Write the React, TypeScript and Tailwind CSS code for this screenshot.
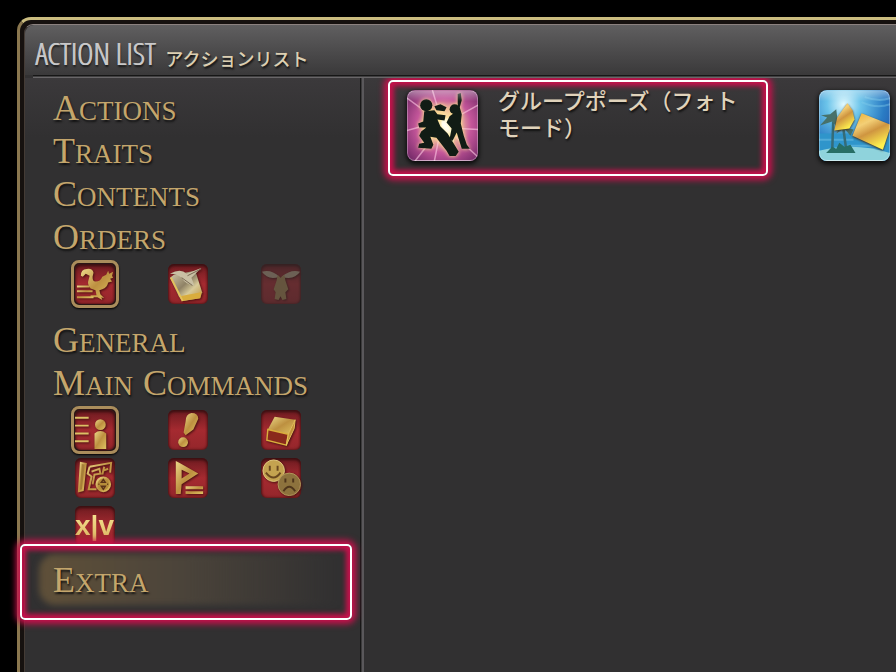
import type { ReactNode } from 'react';

type IconKind =
  | 'mount' | 'journal' | 'pet'
  | 'self' | 'duty' | 'logs'
  | 'travel' | 'party' | 'social'
  | 'system';

interface IconEntry {
  kind: IconKind;
  label: string;
  selected?: boolean;
  disabled?: boolean;
}

const ORDER_ICONS: IconEntry[] = [
  { kind: 'mount', label: 'Companion', selected: true },
  { kind: 'journal', label: 'Carbuncle' },
  { kind: 'pet', label: 'Pet', disabled: true },
];

const COMMAND_ICONS: IconEntry[] = [
  { kind: 'self', label: 'Character', selected: true },
  { kind: 'duty', label: 'Duty' },
  { kind: 'logs', label: 'Logs' },
  { kind: 'travel', label: 'Travel' },
  { kind: 'party', label: 'Party' },
  { kind: 'social', label: 'Social' },
  { kind: 'system', label: 'System' },
];

const GOLD = 'url(#gold)';

/* Shared gradients, referenced by id from the icons */
function Gradients() {
  return (
    <svg className="absolute h-0 w-0" aria-hidden="true">
      <defs>
        <linearGradient id="gold" x1="0" y1="0" x2="1" y2="1">
          <stop offset="0" stopColor="#ecd888" />
          <stop offset="0.5" stopColor="#bd9040" />
          <stop offset="1" stopColor="#e0c463" />
        </linearGradient>
        <linearGradient id="silver" x1="0" y1="0" x2="1" y2="1">
          <stop offset="0" stopColor="#d9cfae" />
          <stop offset="0.45" stopColor="#8f8266" />
          <stop offset="0.65" stopColor="#d8cb9a" />
          <stop offset="1" stopColor="#b98d33" />
        </linearGradient>
        <linearGradient id="ticket" x1="0" y1="0" x2="0.5" y2="1">
          <stop offset="0" stopColor="#f0b030" />
          <stop offset="0.35" stopColor="#f3cf76" />
          <stop offset="0.6" stopColor="#cf9540" />
          <stop offset="1" stopColor="#fff04e" />
        </linearGradient>
        <radialGradient id="burst" cx="0.52" cy="0.5" r="0.7">
          <stop offset="0" stopColor="#fffbe0" />
          <stop offset="0.25" stopColor="#f8cfa0" />
          <stop offset="0.55" stopColor="#c4569a" />
          <stop offset="1" stopColor="#6c2563" />
        </radialGradient>
        <radialGradient id="sky" cx="0.35" cy="0.2" r="0.95">
          <stop offset="0" stopColor="#e2faff" />
          <stop offset="0.25" stopColor="#6cc4ea" />
          <stop offset="0.6" stopColor="#2a7cc4" />
          <stop offset="1" stopColor="#233f9c" />
        </radialGradient>
      </defs>
    </svg>
  );
}

function Glyph({ kind }: { kind: IconKind }) {
  switch (kind) {
    case 'mount':
      return (
        <g fill={GOLD}>
          <path d="M6 12Q6 5 12 5Q18 4 19 9L18 13Q18 18 21 18Q26 18 28 13L32 11L34 7L35 10L39 8L38 12L39 14L36 15L38 18L34 19Q33 24 28 26L25 27L26 31L30 35L27 34L28 37L23 34H16V32H22L21 27L16 25Q12 21 14 16L15 12L11 10L8 13Z" />
          <path d="M2 22H15V24H2ZM2 27H18V29H2ZM2 33H19V35H2Z" />
        </g>
      );
    case 'journal':
      return (
        <>
          <path d="M2 14L6 11L28 7L35 29L33 35L15 38L11 33Z" fill="url(#silver)" />
          <path d="M12 33L34 29L33 35L15 38Z" fill="#d9ad3d" />
          <path d="M3 14L13 34L15 38" fill="none" stroke="#e4c25b" strokeWidth="2" />
          <path d="M2 10Q13 4 19 10L34 4L24 14L27 22Q18 21 14 14Q9 10 2 10Z" fill="#c9c0a4" />
          <path d="M20 12L34 5M14 14L25 22" stroke="#776851" strokeWidth="1" />
        </>
      );
    case 'pet':
      return (
        <g fill="#a5814e">
          <path d="M1 8Q10 5 19 13Q7 17 1 8ZM40 8Q31 5 21 13Q34 17 40 8Z" fill="#b59c82" />
          <path d="M17 11L20 14L24 11L25 17L28 26L25 29L26 36L22 37L20 33L18 37L14 36L15 29L13 26L16 17Z" />
        </g>
      );
    case 'self':
      return (
        <g fill={GOLD}>
          <path d="M0 7H14V9H0ZM0 15H14V17H0ZM0 23H14V25H0ZM0 31H14V33H0Z" fill="#dcc065" />
          <circle cx="26" cy="15" r="5.5" />
          <path d="M20 24Q26 19 32 24V40H20Z" />
        </g>
      );
    case 'duty':
      return (
        <g fill={GOLD}>
          <path d="M18 12Q18 4 24 3Q31 3 31 9L26 20L18 26L16 23Z" />
          <circle cx="15.5" cy="33" r="5" />
        </g>
      );
    case 'logs':
      return (
        <>
          <path d="M14 7L35 10L28 25L7 20Z" fill={GOLD} />
          <path d="M7 20L28 25L26 36L6 31Z" fill="#8a2a1c" stroke="#d9ae3c" strokeWidth="1.5" />
          <path d="M35 10L34 19L26 36L28 25Z" fill="#c1913a" stroke="#e4c25b" />
        </>
      );
    case 'travel':
      return (
        <g fill="none" stroke={GOLD} strokeWidth="2">
          <path d="M6 5L11 6L8 33L4 34Z" fill="#a67f38" />
          <path d="M15 9L37 5L36 15M15 9L13 16L17 19L14 32H22M17 14L25 11L26 16L20 17L18 27M30 9L28 17M29 13L34 11" />
          <circle cx="29" cy="27" r="7" fill="#b68d3a" />
          <path d="M29 22L31 25H27ZM29 32L31 29H27ZM24 27H25M33 27H34" stroke="#5b3218" strokeWidth="1.5" />
        </g>
      );
    case 'party':
      return (
        <g fill={GOLD}>
          <path fillRule="evenodd" d="M8 3L12 5L31 16L14 27L13 37H8ZM14 12V21L22 16Z" />
          <path d="M18 29H36V32H18ZM18 34H36V37H18Z" />
        </g>
      );
    case 'social':
      return (
        <>
          <circle cx="13" cy="13" r="11" fill="#c4a350" stroke="#e0ca80" />
          <path d="M9 8V13M17 8V13M5 15Q13 25 20 15" fill="none" stroke="#69481f" strokeWidth="2" />
          <circle cx="29" cy="27" r="11.5" fill="#8d723d" stroke="#b3985a" />
          <path d="M25 21V25M33 21V25M23 34Q29 25 35 34" fill="none" stroke="#4f351b" strokeWidth="2" />
        </>
      );
    default:
      return null;
  }
}

function CommandIcon({ kind, label, selected, disabled }: IconEntry) {
  return (
    <div className="flex h-12 items-center justify-center">
      <button
        type="button"
        aria-label={label}
        disabled={disabled}
        className={`flex shrink-0 items-center justify-center rounded-lg ${
          selected ? 'border-[3px] border-[#aa8d5c] bg-[#2a1716] p-px shadow-[0_1px_2px_#000]' : ''
        } ${disabled ? 'opacity-45' : ''}`}
      >
        <span className="flex size-10 items-center justify-center rounded-md bg-linear-to-b from-[#6d1b20] via-[#a52a30] to-[#94262b] shadow-[inset_0_2px_3px_#3a1012,inset_0_0_3px_#3a1012]">
          {kind === 'system' ? (
            <span className="bg-linear-to-b from-[#fff0a0] to-[#d4ac54] bg-clip-text font-['Liberation_Sans',sans-serif] text-[28px] leading-10 font-bold text-transparent">
              x|v
            </span>
          ) : (
            <svg viewBox="0 0 41 41" className="size-full drop-shadow-[1px_1px_1px_#4a1010]" aria-hidden="true">
              <Glyph kind={kind} />
            </svg>
          )}
        </span>
      </button>
    </div>
  );
}

function IconGrid({ icons }: { icons: IconEntry[] }) {
  return (
    <div className="ml-[23px] grid w-[279px] grid-cols-3">
      {icons.map(icon => <CommandIcon key={icon.kind} {...icon} />)}
    </div>
  );
}

function MenuItem({ label }: { label: string }) {
  return (
    <button
      type="button"
      className="flex h-[43px] w-full items-center gap-[10px] pl-[28px] text-left font-['Liberation_Serif',serif] text-[27px] leading-[43px] text-[#c4a66c] uppercase [text-shadow:1px_2px_2px_#111]"
    >
      {label.split(' ').map(word => (
        <span key={word} className="inline-block first-letter:text-[36px]">{word}</span>
      ))}
    </button>
  );
}

/* Glowing marker drawn over whatever it surrounds */
function Marker({ className }: { className: string }) {
  return (
    <div
      className={`pointer-events-none absolute rounded-[5px] border-2 border-white shadow-[0_0_6px_4px_#c9104c,inset_0_0_5px_4px_#c9104c] ${className}`}
    />
  );
}

function PoseArt() {
  return (
    <svg viewBox="0 0 70 70" className="size-full" aria-hidden="true">
      <rect width="70" height="70" fill="url(#burst)" />
      <g stroke="#ffc9e4" strokeWidth="1.5" opacity="0.6">
        <path d="M0 8L22 24M0 40L18 35M8 70L25 48M27 70L31 50M70 15L50 26M70 39L52 38M70 66L48 46M25 0L31 20" />
      </g>
      <path d="M34 30L42 27L41 34L48 38L45 55L34 44Z" fill="#fff" />
      <g fill="#111c15" className="drop-shadow-[0_0_2px_#ffe98a]">
        <path d="M50 4L53 3L54 10L52 17L54 24L53 33L56 45L59 54L62 58L54 58L49 42L45 50L42 48L44 38L39 32L42 26L46 23L50 18Z" />
        <circle cx="47" cy="19" r="5" />
        <path d="M17 21L27 20L30 24L38 25L37 30L30 29L33 36L40 43L51 61L48 65L42 65L39 60L29 47L23 46L26 54L24 58L11 57L12 53L17 52L12 45L14 41L19 37L12 37L11 33L16 31Z" />
        <circle cx="19" cy="15" r="6" />
        <path d="M27 16L33 14L39 17L37 21L29 20Z" />
      </g>
    </svg>
  );
}

function BeachArt() {
  return (
    <svg viewBox="0 0 70 70" className="size-full" aria-hidden="true">
      <rect width="70" height="70" fill="url(#sky)" />
      <path d="M0 43H70V70H0Z" fill="#2f95cb" />
      <path d="M0 60Q35 51 70 62V70H0Z" fill="#8fd3dc" />
      <path d="M42 12Q57 19 70 14M45 7Q59 12 70 8M0 49H34M28 55H60" fill="none" stroke="#83cdec" strokeWidth="2" opacity="0.4" />
      <path d="M14 31L13 61M24 38L27 60" stroke="#356c78" strokeWidth="2.5" />
      <path d="M13 31L1 35L8 27L2 25L11 24L17 19L18 27L28 29L20 32L19 38ZM25 38L17 43L21 36L34 39L31 45Z" fill="#47716a" />
      <path d="M7 62L13 56L17 58L20 52L25 56L31 54L36 62Z" fill="#276e65" />
      <g fill="url(#ticket)" strokeLinejoin="round" className="drop-shadow-[0_1px_1px_#3a2c1e]">
        <path d="M28 13L33 20L35 29L30 38L15 40L18 27Z" />
        <path d="M42 23L70 34V38L63 59L33 45Z" />
      </g>
    </svg>
  );
}

function ActionTile({ label, art, children, marked }: { label: string; art: ReactNode; children?: ReactNode; marked?: boolean }) {
  return (
    <button type="button" aria-label={label} className="relative flex items-start gap-5 text-left">
      <span className="relative size-[71px] shrink-0 overflow-hidden rounded-lg shadow-[0_2px_4px_1px_#0b0b0b]">
        {art}
        <span className="absolute inset-0 rounded-lg border border-white/30 bg-linear-to-b from-white/40 to-transparent to-15%" />
      </span>
      {children && (
        <span className="-mt-1 w-[248px] font-['Noto_Sans_CJK_JP',sans-serif] text-[22px] leading-[27px] font-medium text-[#e0d3bb] [text-shadow:1px_2px_2px_#111]">
          {children}
        </span>
      )}
      {marked && <Marker className="-top-[10px] -bottom-[15px] -left-[19px] w-[380px]" />}
    </button>
  );
}

export default function App() {
  return (
    <div className="flex h-screen overflow-hidden bg-black pt-[17px] pl-[17px]">
      <Gradients />
      <div className="flex flex-1 rounded-tl-[14px] border-t-[3px] border-l-[3px] border-t-[#cbbd80] border-l-[#8a774f] bg-[#16110f] pt-[4px] pl-[4px]">
        <div className="flex min-w-0 flex-1 flex-col rounded-tl-[9px] border-t border-l border-t-[#8c8280] border-l-[#443b35] bg-[#323132]">
          <header className="flex h-[50px] shrink-0 items-end gap-[10px] rounded-tl-[9px] bg-linear-to-b from-[#605f60] to-[#3a393a] pl-[10px]">
            <h1 className="font-['Open_Sans_Condensed_Light','Open_Sans_Condensed','Roboto_Condensed',sans-serif] text-[31px] leading-[44px] font-light text-[#c9c9ca] [text-shadow:1px_0_#c9c9ca,1px_2px_2px_#111]">
              ACTION LIST
            </h1>
            <p className="font-['Noto_Sans_CJK_JP',sans-serif] text-[18px] leading-[34px] font-medium text-[#dccfb2] [text-shadow:1px_2px_2px_#111]">
              アクションリスト
            </p>
          </header>
          <div className="ml-[8px] h-[3px] shrink-0 border-t border-b border-t-[#161616] border-b-[#686668] bg-[#403f40]" />

          <div className="flex min-h-0 flex-1 bg-linear-to-b from-[#3b393b] to-[#313031] to-10%">
            <nav className="w-[335px] shrink-0 pt-[10px]">
              <MenuItem label="Actions" />
              <MenuItem label="Traits" />
              <MenuItem label="Contents" />
              <MenuItem label="Orders" />
              <div className="pb-[12px]">
                <IconGrid icons={ORDER_ICONS} />
              </div>
              <MenuItem label="General" />
              <MenuItem label="Main Commands" />
              <IconGrid icons={COMMAND_ICONS} />
              <div className="relative mt-[4px] pt-[6px] pb-[2px]">
                <div className="absolute inset-y-0 right-5 left-[14px] rounded-l-2xl bg-linear-to-r from-[#5f5039] via-[#4a433a] to-transparent blur-[3px]" />
                <div className="relative">
                  <MenuItem label="Extra" />
                </div>
                <Marker className="-top-[10px] -bottom-[15px] -left-[5px] w-[332px]" />
              </div>
            </nav>

            <div className="w-[4px] shrink-0 border-r-2 border-l border-r-[#5a585b] border-l-[#171717] bg-[#3c3b3c]" />

            <main className="grid flex-1 auto-rows-min grid-cols-[412px_412px] overflow-hidden pt-[12px] pl-[43px]">
              <ActionTile label="グループポーズ（フォトモード）" art={<PoseArt />} marked>
                グループポーズ（フォトモード）
              </ActionTile>
              <ActionTile label="Beach" art={<BeachArt />} />
            </main>
          </div>
        </div>
      </div>
    </div>
  );
}
